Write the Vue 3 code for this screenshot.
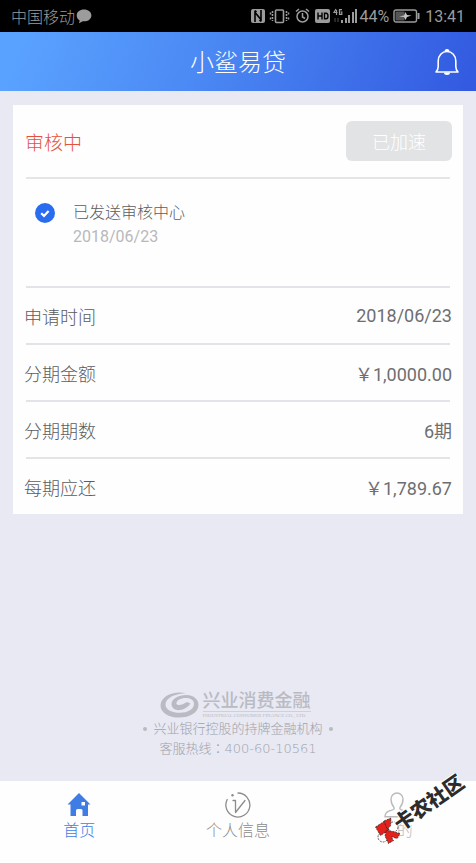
<script setup>
const rows = [
  { label: '申请时间', value: '2018/06/23' },
  { label: '分期金额', value: '￥1,0000.00' },
  { label: '分期期数', value: '6期' },
  { label: '每期应还', value: '￥1,789.67' },
]
</script>

<template>
  <div class="page">
    <div class="status">
      <span>中国移动</span>
      <svg class="bubble" width="16" height="15" viewBox="0 0 16 15" aria-hidden="true">
        <path d="M8 0.5C3.8 0.5 0.7 3 0.7 6.4c0 2.200 1.200 3.900 3 5L3 14.300l3.800-2.100c4.900 0.500 8.600-2.200 8.600-5.800C15.400 3 12.200 0.500 8 0.500z" fill="currentColor" />
      </svg>
      <div class="status-icons">
        <svg width="122" height="18" viewBox="0 0 122 18" aria-hidden="true">
          <g fill="none" stroke="currentColor">
            <rect x="2" y="2" width="14" height="14" rx="2" fill="currentColor" stroke="none" />
            <path d="M6 15V5.500l6 7V3M6 3.500l1.500 1.500M12 14.500l-1.500-1.500" stroke="#000" stroke-width="1.600" />
            <rect x="26.500" y="3" width="8" height="12.500" rx="1" stroke-width="1.600" />
            <path d="M23.500 4v10M37.500 4v10M21.500 5.500v2M21.500 10.500v2M39.500 5.500v2M39.500 10.500v2" stroke-width="1.500" stroke-dasharray="2 1" />
            <circle cx="53.500" cy="9.500" r="5.500" stroke-width="1.500" />
            <path d="M53.500 6v4l2.500 1.500M47 4.500L50 2M60 4.500L57 2" stroke-width="1.500" />
            <rect x="66" y="2" width="15" height="14" rx="2" fill="currentColor" stroke="none" />
            <path d="M69 5.500v7M73 5.500v7M69 9h4M75.500 6.200v5.600h1.500q2 0 2-2.800t-2-2.800z" stroke="#000" stroke-width="1.400" />
            <path d="M87 2L85 5.500h3.500M87.500 3v5M93 2.700h-2.500v4.600h2.300V5h-1.300" stroke-width="1.200" />
            <path d="M86 11v4M89 11v4" stroke-width="1" opacity="0.500" />
          </g>
          <g fill="currentColor">
            <rect x="92" y="13" width="2" height="3" />
            <rect x="96" y="11" width="2" height="5" />
            <rect x="99" y="8" width="2" height="8" />
            <rect x="103" y="5" width="2" height="11" />
            <rect x="106" y="2" width="2" height="14" />
          </g>
        </svg>
      </div>
      <span class="percent">44%</span>
      <svg class="battery" width="27" height="14" viewBox="0 0 27 14" aria-hidden="true">
        <rect x="1" y="1" width="22.500" height="12" rx="2" fill="none" stroke="currentColor" stroke-width="1.400" />
        <rect x="2.500" y="2.500" width="9" height="9" fill="#555" />
        <path d="M25.500 4v6" stroke="currentColor" stroke-width="2" />
        <path d="M6 7.500l5-1L12.500 3l1.500 3 4.500 0.500-4.500 1.500-1.500 3-1.500-3z" fill="#c4c4c4" />
      </svg>
      <span class="time">13:41</span>
    </div>

    <header class="header">
      <h1>小鲨易贷</h1>
      <button class="bell" type="button" aria-label="消息">
        <svg width="26" height="28" viewBox="0 0 26 28" aria-hidden="true">
          <path d="M2 24c1.700-1.700 2.200-2.800 2.200-5.500v-5.500C4.200 7.500 8 3.500 13 3.500s8.800 4 8.800 9.500v5.500c0 2.700 0.500 3.800 2.200 5.500z" fill="none" stroke="#fff" stroke-width="1.600" stroke-linejoin="round" />
          <path d="M10.500 3.500a2.500 2.500 0 0 1 5 0zM10 24.500h6a3 2.500 0 0 1-6 0z" fill="#fff" />
        </svg>
      </button>
    </header>

    <main class="main">
      <section class="card">
        <div class="card-head">
          <h2>审核中</h2>
          <button class="speed" type="button" disabled>已加速</button>
        </div>
        <div class="step">
          <svg width="20" height="20" viewBox="0 0 20 20" aria-hidden="true">
            <circle cx="10" cy="10" r="10" fill="#2a6cf0" />
            <path d="M6.200 10.300l2.800 2.600 4.600-4.900" fill="none" stroke="#fff" stroke-width="2.200" />
          </svg>
          <div>
            <p class="step-title">已发送审核中心</p>
            <p class="step-date">2018/06/23</p>
          </div>
        </div>
        <dl class="rows">
          <div v-for="row in rows" :key="row.label" class="row">
            <dt>{{ row.label }}</dt>
            <dd>{{ row.value }}</dd>
          </div>
        </dl>
      </section>

      <footer class="brand">
        <div class="brand-logo">
          <svg width="39" height="26" viewBox="0 0 39 26" aria-hidden="true">
            <path d="M26 1.200C14-1.500 0.500 4 0.500 13.500 0.500 21 9 25.600 19 25.600c11 0 19.500-5 19.500-12.800C38.500 7 33 3 26.500 3 18 3 11.500 7 11.500 12c0 4.500 4.500 6.800 9 6 4-0.700 7.500-3 10-6.500l-3.500-1.500c-2.500 1-5 3-8 3-2 0-3-1-2.500-2.500C17.500 7.500 21.500 6 26 6c5 0 8 2.500 8 6 0 5-6 8.800-14 8.800C12 20.800 5.500 18 5.500 12.500 5.500 6 15 1.500 26 1.200z" fill="currentColor" />
          </svg>
          <div>
            <p class="brand-name">兴业消费金融</p>
            <p class="brand-en">INDUSTRIAL CONSUMER FINANCE CO., LTD</p>
          </div>
        </div>
        <p class="slogan"><i></i><span>兴业银行控股的持牌金融机构</span><i></i></p>
        <p class="hotline">客服热线：400-60-10561</p>
      </footer>
    </main>

    <nav class="tabs">
      <a class="tab active" href="#home">
        <svg width="26" height="26" viewBox="0 0 26 26" aria-hidden="true">
          <path fill-rule="evenodd" d="M13 1L24.500 12.500H22V24h-5.500v-5.500q0-1.500-1.500-1.500h-3.500q-1.500 0-1.500 1.500V24H4.500V12.500H1.500zM15.500 10v3.500H19V10z" fill="currentColor" />
        </svg>
        <span>首页</span>
      </a>
      <a class="tab" href="#info">
        <svg width="26" height="26" viewBox="0 0 26 26" aria-hidden="true">
          <g fill="none" stroke="currentColor" stroke-width="1.300" stroke-linecap="round" stroke-linejoin="round">
            <path d="M13 1A12 12 0 1 1 2.200 7.500" />
            <path d="M8 8.500h2.500v12L20 8.500" />
          </g>
          <circle cx="7.500" cy="3.300" r="1.200" fill="currentColor" />
        </svg>
        <span>个人信息</span>
      </a>
      <a class="tab faint" href="#mine">
        <svg width="26" height="26" viewBox="0 0 26 26" aria-hidden="true">
          <path d="M10 15.500C7 12 7 8.500 7 7a6 6 0 0 1 12 0c0 1.500 0 5-3 8.500-0.800 2 1 2.200 4 3.200 4 1.300 5 3 5 6H1c0-3 1-4.700 5-6 3-1 4.800-1.200 4-3.200z" fill="none" stroke="currentColor" stroke-width="1.400" />
        </svg>
        <span>我的</span>
      </a>
      <div class="mark">
        <svg width="26" height="28" viewBox="0 0 26 28" aria-hidden="true">
          <g stroke="#222" stroke-width="0.700" stroke-dasharray="2 1">
            <circle cx="18" cy="10" r="5" fill="#fff" />
            <circle cx="8" cy="20" r="5" fill="#fff" />
            <path d="M0.500 10L9 4.500 14 13 5.500 18.500z" fill="#e3221c" />
            <path d="M9 4L16 1 15.500 9 12 12z" fill="#e3221c" />
            <path d="M11.500 13L25 16.500 22 21.500 16 19.500 18.500 23.500 13.500 26.500 10 19z" fill="#e3221c" />
          </g>
        </svg>
        <span class="mark-text">卡农社区</span>
      </div>
    </nav>
  </div>
</template>

<style>
body {
  margin: 0;
  background: #e8eaf2;
}
</style>

<style scoped>
.page {
  display: flex;
  flex-direction: column;
  min-height: 100vh;
  font-family: Roboto, "Noto Sans CJK SC", sans-serif;
  font-weight: 300;
  color: #5c5c5e;
  background: #e8e9f3;
}
h1, h2, p, dl, dd {
  margin: 0;
  font-weight: inherit;
}
svg {
  display: block;
  flex: none;
}
.status {
  display: flex;
  align-items: center;
  height: 32px;
  padding: 0 11px;
  font-size: 16px;
  color: #9c9c9c;
  background: #000;
}
.bubble {
  margin-left: 1px;
}
.status-icons {
  flex: 1;
  display: flex;
  justify-content: flex-end;
}
.status-icons svg {
  margin-right: -12px;
}
.percent, .time {
  font-weight: 400;
}
.battery {
  margin: 0 5px 0 4px;
}
.header {
  display: grid;
  grid-template-columns: 1fr auto 1fr;
  align-items: center;
  height: 59px;
  padding: 0 16px;
  color: #fff;
  background: linear-gradient(110deg, #5aa2ff 5%, #4a87f3 45%, #3259e0 100%);
}
.header h1 {
  grid-column: 2;
  padding-top: 2px;
  font-size: 24px;
  line-height: 32px;
}
.bell {
  justify-self: end;
  padding: 0;
  border: 0;
  background: none;
}
.main {
  flex: 1;
  display: flex;
  flex-direction: column;
  justify-content: space-between;
  padding: 14px 13px 22px;
}
.card {
  background: #fefefe;
}
.card-head {
  display: flex;
  align-items: center;
  justify-content: space-between;
  height: 72px;
  padding: 0 11px 0 12px;
}
.card-head h2 {
  font-size: 19px;
  color: #e4523e;
}
.speed {
  width: 106px;
  height: 40px;
  padding: 0;
  border: 0;
  border-radius: 6px;
  font-family: inherit;
  font-size: 18px;
  font-weight: 300;
  color: #fff;
  background: #e2e3e5;
}
.step {
  box-sizing: border-box;
  display: flex;
  align-items: flex-start;
  gap: 18px;
  height: 109px;
  margin: 0 13px;
  padding: 24px 9px 0;
  border-top: 2px solid #e4e5e6;
}
.step-title {
  font-size: 16px;
  line-height: 20px;
}
.step-date {
  padding-top: 4px;
  font-size: 16px;
  line-height: 20px;
  font-weight: 400;
  color: #b8b8bc;
}
.row {
  box-sizing: border-box;
  display: flex;
  align-items: center;
  justify-content: space-between;
  height: 57px;
  padding: 2px 11px 0;
  font-size: 18px;
  background: linear-gradient(#e4e4e8, #e4e4e8) center top / calc(100% - 26px) 2px no-repeat;
}
.row dd {
  font-weight: 400;
  color: #6e6e70;
}
.brand {
  display: flex;
  flex-direction: column;
  align-items: center;
  font-size: 13px;
  line-height: 20px;
  color: #a0a2aa;
}
.brand-logo {
  display: flex;
  align-items: center;
  gap: 4px;
  padding-right: 6px;
  color: #b9bbc3;
}
.brand-name {
  font-family: "Liberation Serif", "Noto Sans CJK SC", serif;
  font-size: 18px;
  line-height: 20px;
  font-weight: 500;
}
.brand-en {
  font-family: "Liberation Serif", serif;
  font-size: 5px;
  line-height: 7px;
  font-weight: 400;
  border-top: 1px solid #cfd0d8;
}
.slogan {
  display: flex;
  align-items: center;
  gap: 6px;
}
.slogan i {
  width: 4px;
  height: 4px;
  border-radius: 50%;
  background: #b9bbc3;
}
.hotline {
  font-family: "DejaVu Sans", "Noto Sans CJK TC", sans-serif;
}
.tabs {
  position: relative;
  display: grid;
  grid-template-columns: repeat(3, 1fr);
  height: 82px;
  background: #fefefe;
}
.tab {
  display: flex;
  flex-direction: column;
  align-items: center;
  gap: 3px;
  padding-top: 11px;
  font-size: 16px;
  line-height: 20px;
  text-decoration: none;
  color: #8c8c8c;
}
.tab.active {
  color: #3f7de4;
}
.tab.faint {
  color: #bbb;
}
.mark {
  position: absolute;
  right: 75px;
  bottom: 18px;
}
.mark-text {
  position: absolute;
  left: 14px;
  top: -26px;
  font-size: 20px;
  line-height: 24px;
  font-weight: 900;
  white-space: nowrap;
  color: #2c2c2c;
  text-shadow: 1px 1px 0 #fff, -1px -1px 0 #fff;
  transform: rotate(-35deg);
}
</style>
